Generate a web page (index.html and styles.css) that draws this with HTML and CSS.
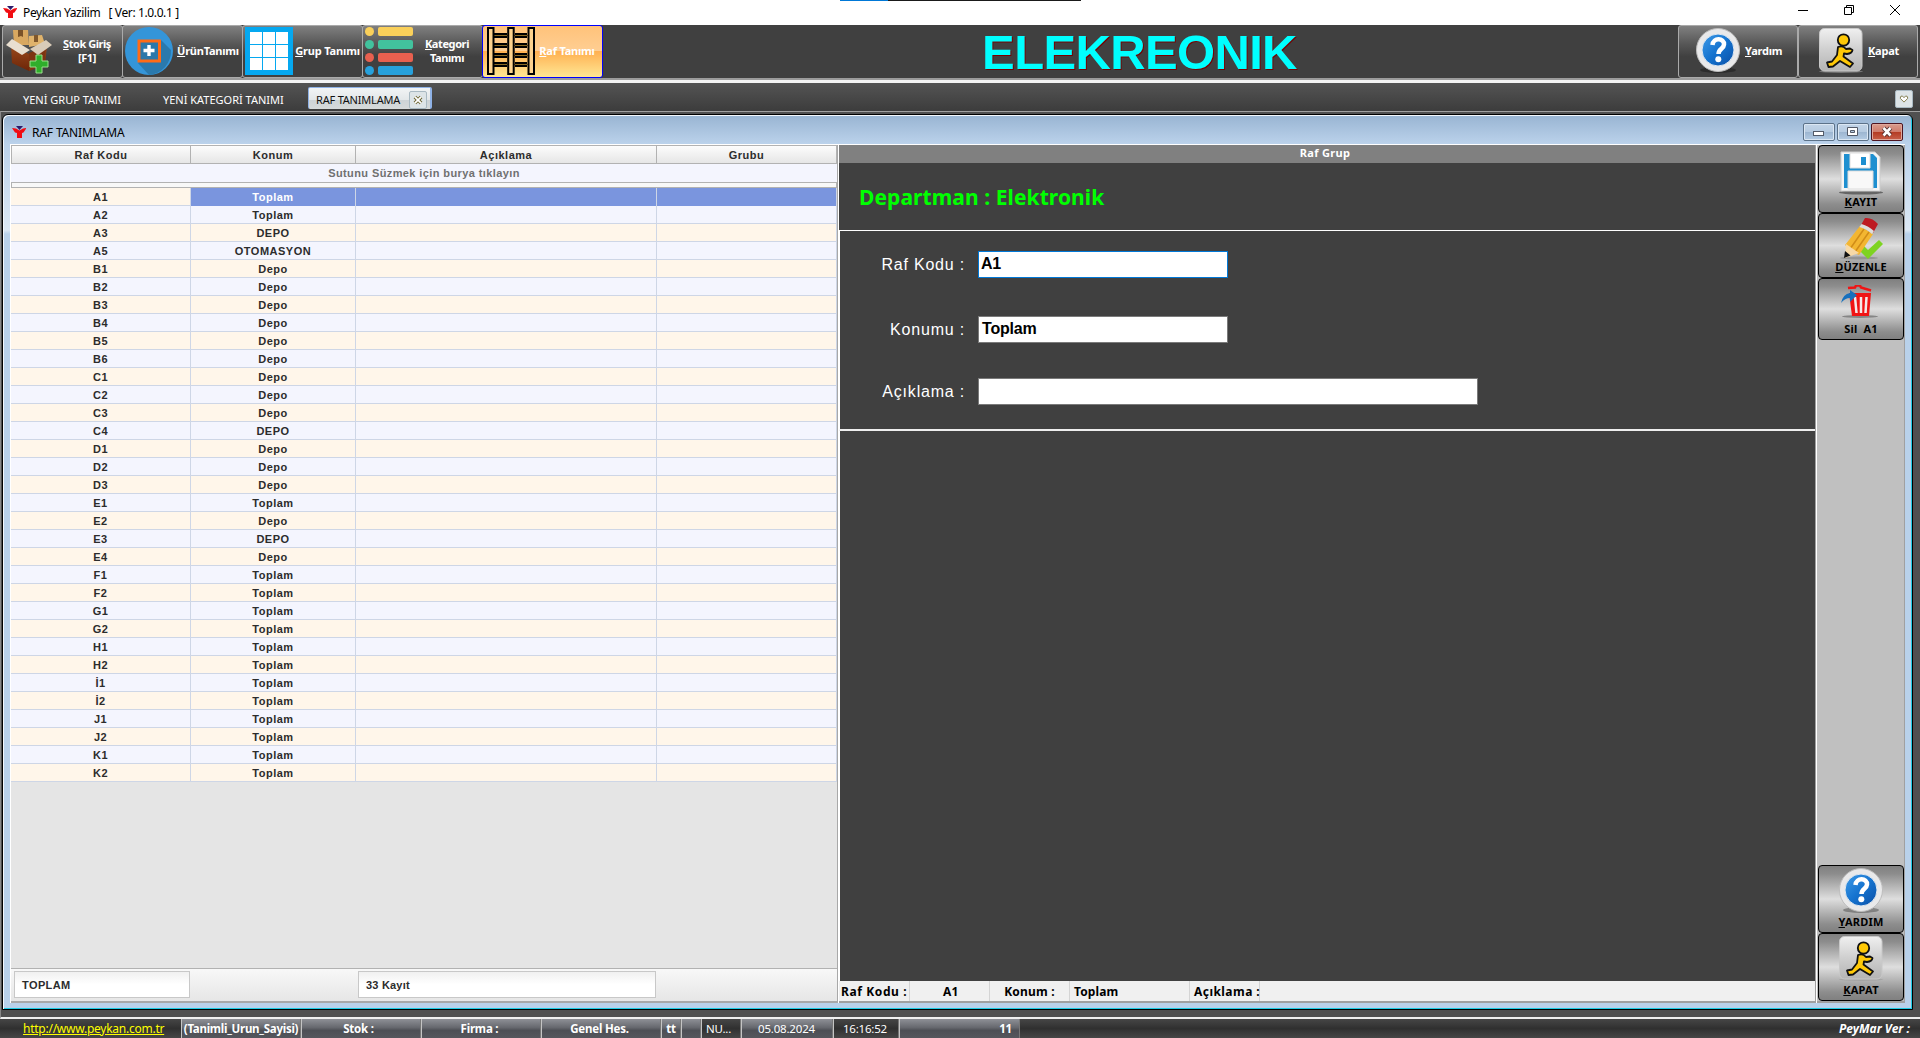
FILE: index.html
```html
<!DOCTYPE html>
<html lang="tr">
<head>
<meta charset="utf-8">
<title>Peykan Yazilim</title>
<link rel="stylesheet" href="styles.css">
</head>
<body>
<svg class="defs" width="0" height="0" aria-hidden="true">
  <defs>
    <linearGradient id="blue" x1="0" y1="0" x2="1" y2="1"><stop offset="0" stop-color="#3f9be8"/><stop offset=".5" stop-color="#1573cf"/><stop offset="1" stop-color="#0a4fa6"/></linearGradient>
    <linearGradient id="plate" x1="0" y1="0" x2="0" y2="1"><stop offset="0" stop-color="#f0f0f0"/><stop offset=".5" stop-color="#cfcfcf"/><stop offset="1" stop-color="#b4b4b4"/></linearGradient>
    <linearGradient id="carton" x1="0" y1="0" x2="0" y2="1"><stop offset="0" stop-color="#9a4a1c"/><stop offset="1" stop-color="#6d2508"/></linearGradient>
  </defs>
  <symbol id="logo" viewBox="0 0 14 12"><path d="M4 0h7L7.500 4z" fill="#2b1a6b"/><path d="M0 2l4 .5L7.500 4.500 11 2.500l3.500-.5-3 4.500-1.500.5v5H5V7l-2-.5z" fill="#f10c12"/></symbol>
  <symbol id="help" viewBox="0 0 44 46"><ellipse cx="22" cy="42" rx="18" ry="3" fill="#000" opacity=".3"/><circle cx="22" cy="22" r="21.500" fill="#e9e9ea" stroke="#bdbdbd"/><circle cx="22" cy="22" r="16" fill="url(#blue)" stroke="#dfe7ef"/><path d="M16.500 17c.5-8 12-7 11.500-.5-.3 4.500-5.500 4-5.500 9.500" fill="none" stroke="#fff" stroke-width="4.500"/><circle cx="22.300" cy="31.300" r="3" fill="#fff"/></symbol>
  <symbol id="runner" viewBox="0 0 44 46"><ellipse cx="22" cy="43.500" rx="22" ry="1.500" fill="#999" opacity=".6"/><rect x=".5" y=".5" width="42.500" height="42.500" rx="5" fill="url(#plate)" stroke="#c8c8c8"/><path d="M19 19Q24 17 27 21L31 20.500 33.500 22Q33 25.500 28 26L25 25.500 24.500 28.500 34 35.500 31 39 21 33 14 38.500 9.500 39 8 34.500 13 33.500 18 27z" fill="#ffc907" stroke="#111" stroke-width="1.800" stroke-linejoin="round"/><circle cx="24.500" cy="12" r="5.700" fill="#ffc907" stroke="#111" stroke-width="1.800"/></symbol>
</svg>

<div class="app">
  <header class="titlebar">
    <svg class="logo"><use href="#logo"/></svg>
    <span class="app-title">Peykan Yazilim   [ Ver: 1.0.0.1 ]</span>
    <div class="win-controls">
      <svg viewBox="0 0 10 10"><path d="M0 5.500h10"/></svg>
      <svg viewBox="0 0 10 10"><path d="M.5 2.500h7v7h-7zM2.500 2.500v-2h7v7h-2"/></svg>
      <svg viewBox="0 0 10 10"><path d="M0 0l10 10M10 0L0 10"/></svg>
    </div>
    <div class="peek"></div>
  </header>

  <nav class="toolbar">
    <button class="tool">
      <svg width="48" height="48" viewBox="0 0 48 48"><path d="M8 3h15l1 15H9z" fill="#d9a860"/><path d="M13 3h5v7l-2-1-3 1z" fill="#7a5228"/><path d="M24 9l13-1 3 9-16 3z" fill="#e0b36b"/><path d="M29 8h4v7h-4z" fill="#80582c"/><path d="M6 18l18 9 18-8-2 18-16 7-17-8z" fill="url(#carton)"/><path d="M24 26l17-7-2 19-15 6z" fill="#7d3411"/><path d="M7 12l18 11-8 5L1 18z" fill="#e9dfd0"/><path d="M25 22l16-9 6 5-14 10z" fill="#d9ccb9"/><path d="M31 28h6v6h6v6h-6v6h-6v-6h-6v-6h6z" fill="#2fae2b" stroke="#9be08d"/></svg>
      <span class="cap cap-stok"><u>S</u>tok Giriş<br>[F1]</span>
    </button>
    <button class="tool">
      <svg width="48" height="48" viewBox="0 0 48 48"><circle cx="24" cy="24" r="24" fill="#3495d9"/><path d="M36 13l10 10a24 24 0 0 1-22 25L13 36z" fill="#2a79ad"/><rect x="14" y="14" width="20.500" height="20" fill="#2b78aa" stroke="#ff6b16" stroke-width="3"/><path d="M24 18v11M18.500 23.500h11" stroke="#fff" stroke-width="3.400"/></svg>
      <span class="cap cap-urun"><u>Ü</u>rünTanımı</span>
    </button>
    <button class="tool">
      <svg width="48" height="48" viewBox="0 0 48 48"><path fill="#05a8f0" d="M0 0h48v48H0z"/><path fill="#fff" d="M5 5h12v12H5zM18 5h12v12H18zM31 5h12v12H31zM5 18h12v12H5zM18 18h12v12H18zM31 18h12v12H31zM5 31h12v12H5zM18 31h12v12H18zM31 31h12v12H31z"/></svg>
      <span class="cap cap-grup"><u>G</u>rup Tanımı</span>
    </button>
    <button class="tool">
      <svg width="48" height="48" viewBox="0 0 48 48"><g fill="#fad05a"><circle cx="4.500" cy="4.500" r="4.500"/><rect x="13" width="35" height="9" rx="2"/></g><g fill="#42c29d"><circle cx="4.500" cy="17.500" r="4.500"/><rect x="13" y="13" width="35" height="9" rx="2"/></g><g fill="#e8604f"><circle cx="4.500" cy="30.500" r="4.500"/><rect x="13" y="26" width="35" height="9" rx="2"/></g><g fill="#27a1dc"><circle cx="4.500" cy="43.500" r="4.500"/><rect x="13" y="39" width="35" height="9" rx="2"/></g></svg>
      <span class="cap cap-kat"><u>K</u>ategori<br>Tanımı</span>
    </button>
    <button class="tool active">
      <svg width="48" height="48" viewBox="0 0 48 48"><path d="M7 7h13M7 10h13M7 17h13M7 20h13M7 27h13M7 30h13M7 36h13M7 39h13M28 7h12M28 10h12M28 17h12M28 20h12M28 27h12M28 30h12M28 36h12M28 39h12" stroke="#000" stroke-width="2"/><path d="M7 8.500h34M7 18.500h34M7 28.500h34M7 37.500h34" stroke="#8a6a24"/><g fill="#fdd28e" stroke="#000" stroke-width="2"><rect x="1" y="1" width="5.500" height="46"/><rect x="21.200" y="1" width="5.500" height="46"/><rect x="41.500" y="1" width="5.500" height="46"/></g></svg>
      <span class="cap cap-raf"><u>R</u>af Tanımı</span>
    </button>
    <h1 class="brand">ELEKREONIK</h1>
    <button class="tool tool-help"><svg width="44" height="46"><use href="#help"/></svg><span class="cap"><u>Y</u>ardım</span></button>
    <button class="tool tool-exit"><svg width="44" height="46"><use href="#runner"/></svg><span class="cap"><u>K</u>apat</span></button>
  </nav>

  <div class="tabs">
    <span class="tab tab-a">YENİ GRUP TANIMI</span>
    <span class="tab tab-b">YENİ KATEGORİ TANIMI</span>
    <span class="tab tab-on">RAF TANIMLAMA<svg class="tab-x" viewBox="0 0 18 18"><path d="M5.500 5.500l7 7M12.500 5.500l-7 7" stroke="#6b6330" stroke-width="4"/><path d="M5.500 5.500l7 7M12.500 5.500l-7 7" stroke="#fff" stroke-width="2"/></svg></span>
    <svg class="tab-more" viewBox="0 0 18 18"><path d="M5 6.500l2-1 2 2 2-2 2 1v2l-4 4-4-4z" fill="#fff" stroke="#77703c"/></svg>
  </div>

  <div class="desk">
    <section class="window">
      <div class="win-title">
        <svg class="logo"><use href="#logo"/></svg>
        <span>RAF TANIMLAMA</span>
        <div class="mdi">
          <i><svg viewBox="0 0 30 16"><rect x="9.500" y="7.500" width="10" height="4" fill="#fff" stroke="#535a68"/></svg></i>
          <i><svg viewBox="0 0 30 16"><path d="M9.500 3.500h10v8h-10z M12.500 6.500v2h4v-2z" fill="#fff" fill-rule="evenodd" stroke="#535a68"/></svg></i>
          <i class="x"><svg viewBox="0 0 30 16"><path d="M11.500 4l7 7.500M18.500 4l-7 7.500" stroke="#503030" stroke-width="4.500"/><path d="M11.500 4l7 7.500M18.500 4l-7 7.500" stroke="#fff" stroke-width="2.600"/></svg></i>
        </div>
      </div>
      <div class="client">
        <div class="grid">
          <div class="head"><b>Raf Kodu</b><b>Konum</b><b>Açıklama</b><b>Grubu</b></div>
          <div class="filter">Sutunu Süzmek için burya tıklayın</div>
          <div class="split"></div>
          <div class="rows">
            <div class="row sel"><b>A1</b><b>Toplam</b><b></b><b></b></div>
            <div class="row"><b>A2</b><b>Toplam</b><b></b><b></b></div>
            <div class="row"><b>A3</b><b>DEPO</b><b></b><b></b></div>
            <div class="row"><b>A5</b><b>OTOMASYON</b><b></b><b></b></div>
            <div class="row"><b>B1</b><b>Depo</b><b></b><b></b></div>
            <div class="row"><b>B2</b><b>Depo</b><b></b><b></b></div>
            <div class="row"><b>B3</b><b>Depo</b><b></b><b></b></div>
            <div class="row"><b>B4</b><b>Depo</b><b></b><b></b></div>
            <div class="row"><b>B5</b><b>Depo</b><b></b><b></b></div>
            <div class="row"><b>B6</b><b>Depo</b><b></b><b></b></div>
            <div class="row"><b>C1</b><b>Depo</b><b></b><b></b></div>
            <div class="row"><b>C2</b><b>Depo</b><b></b><b></b></div>
            <div class="row"><b>C3</b><b>Depo</b><b></b><b></b></div>
            <div class="row"><b>C4</b><b>DEPO</b><b></b><b></b></div>
            <div class="row"><b>D1</b><b>Depo</b><b></b><b></b></div>
            <div class="row"><b>D2</b><b>Depo</b><b></b><b></b></div>
            <div class="row"><b>D3</b><b>Depo</b><b></b><b></b></div>
            <div class="row"><b>E1</b><b>Toplam</b><b></b><b></b></div>
            <div class="row"><b>E2</b><b>Depo</b><b></b><b></b></div>
            <div class="row"><b>E3</b><b>DEPO</b><b></b><b></b></div>
            <div class="row"><b>E4</b><b>Depo</b><b></b><b></b></div>
            <div class="row"><b>F1</b><b>Toplam</b><b></b><b></b></div>
            <div class="row"><b>F2</b><b>Toplam</b><b></b><b></b></div>
            <div class="row"><b>G1</b><b>Toplam</b><b></b><b></b></div>
            <div class="row"><b>G2</b><b>Toplam</b><b></b><b></b></div>
            <div class="row"><b>H1</b><b>Toplam</b><b></b><b></b></div>
            <div class="row"><b>H2</b><b>Toplam</b><b></b><b></b></div>
            <div class="row"><b>İ1</b><b>Toplam</b><b></b><b></b></div>
            <div class="row"><b>İ2</b><b>Toplam</b><b></b><b></b></div>
            <div class="row"><b>J1</b><b>Toplam</b><b></b><b></b></div>
            <div class="row"><b>J2</b><b>Toplam</b><b></b><b></b></div>
            <div class="row"><b>K1</b><b>Toplam</b><b></b><b></b></div>
            <div class="row"><b>K2</b><b>Toplam</b><b></b><b></b></div>
          </div>
          <div class="foot"><span class="sum">TOPLAM</span><span class="sum count">33 Kayıt</span></div>
        </div>

        <div class="form">
          <div class="form-cap">Raf Grup</div>
          <div class="dept"><span>Departman : Elektronik</span></div>
          <div class="fields">
            <label class="field f1"><span>Raf Kodu :</span><span class="input focus">A1</span></label>
            <label class="field f2"><span>Konumu :</span><span class="input">Toplam</span></label>
            <label class="field f3"><span>Açıklama :</span><span class="input wide"></span></label>
          </div>
          <div class="blank"></div>
          <div class="info"><span class="i1">Raf Kodu :</span><span class="i2">A1</span><span class="i3">Konum :</span><span class="i4">Toplam</span><span class="i5">Açıklama :</span></div>
        </div>

        <aside class="side">
          <button class="act h68"><svg width="46" height="44" viewBox="0 0 46 44"><ellipse cx="23" cy="41.500" rx="22" ry="2" fill="#333" opacity=".6"/><path d="M3 1h34l5 5v34H3z" fill="#f4f4f4" stroke="#ccc"/><path d="M6 3h29l4 4v30H6z" fill="#1e8fd0"/><path d="M12 2h20v15H12z" fill="#fff" stroke="#ddd"/><path d="M23 6h5v8h-5z" fill="#1e8fd0"/><path d="M10 20h25v18H10z" fill="#f8f8f8" stroke="#ddd"/></svg><span><u>K</u>AYIT</span></button>
          <button class="act h65"><svg width="46" height="44" viewBox="0 0 46 44"><ellipse cx="21" cy="42" rx="19" ry="1.500" fill="#888" opacity=".7"/><path d="M20 33l5-4 5 5L41 24l4 4-15 15z" fill="#7ed321"/><path d="M22 10l13 8-14 21-7-3-7-7z" fill="#f3b631"/><path d="M26 13l-14 20M31 16L17 36" stroke="#d18d18" stroke-width="1.500"/><path d="M8 28l13 9-14 5z" fill="#f7d9a7"/><path d="M7 35l5.500 4.500L6 42z" fill="#111"/><path d="M23 9l4-7q7-1 13 6l-5 9q-5-6-12-8z" fill="#bd1a22"/><path d="M21.500 11l2-3q7 2 12.500 7l-2 3q-5-5-12.500-7z" fill="#ddd"/></svg><span><u>D</u>ÜZENLE</span></button>
          <button class="act h62 del"><svg width="46" height="34" viewBox="0 0 46 34"><ellipse cx="22" cy="31.500" rx="18" ry="1.500" fill="#777" opacity=".8"/><path d="M10 3l7-.5 1-2h4l1 2 10 3" stroke="#f01414" stroke-width="2.500" fill="none"/><path d="M11 8h22l-2 23H14z" fill="#f01414"/><path d="M17 12l1.500 16M23 12v16M28.500 12l-1 16" stroke="#f5e9e9" stroke-width="2.500"/><path d="M3 18Q5 9 12 8V5l7 5-7 7v-4q-5 0-9 5z" fill="#1770bd"/></svg><span>Sil&nbsp; A1</span></button>
          <div class="gap"></div>
          <button class="act h68 low"><svg width="44" height="46"><use href="#help"/></svg><span><u>Y</u>ARDIM</span></button>
          <button class="act h68 low last"><svg width="44" height="46"><use href="#runner"/></svg><span><u>K</u>APAT</span></button>
        </aside>
      </div>
    </section>
  </div>

  <footer class="status">
    <span class="link">http://www.peykan.com.tr</span>
    <span class="seg s120 tan">(Tanimli_Urun_Sayisi)</span>
    <span class="seg s120 stk">Stok :</span>
    <span class="seg s120 frm">Firma :</span>
    <span class="seg s120 frm">Genel Hes.</span>
    <span class="seg s20">tt</span>
    <span class="seg s20"></span>
    <span class="seg dark num">NU...</span>
    <span class="seg date">05.08.2024</span>
    <span class="seg dark time">16:16:52</span>
    <span class="seg cnt">11</span>
    <span class="ver">PeyMar Ver :</span>
  </footer>
</div>
</body>
</html>
```
FILE: styles.css
```css
* { box-sizing: border-box; }
body { margin: 0; width: 1920px; height: 1038px; overflow: hidden; font-family: "Noto Sans", "Open Sans", sans-serif; font-size: 12px; color: #000; }
.defs { position: absolute; }
.app { display: flex; flex-direction: column; height: 1038px; background: #505050; }
button { border: 0; padding: 0; font: inherit; background: none; }
span, b { white-space: pre; }
.logo { width: 14px; height: 12px; flex: none; }

.titlebar { height: 25px; background: #fff; display: flex; align-items: center; padding: 0 20px 0 3px; position: relative; }
.titlebar .logo { margin-top: -2px; }
.app-title { margin-left: 6px; margin-top: -1px; letter-spacing: -.38px; }
.win-controls { margin-left: auto; display: flex; gap: 36px; margin-top: -5px; }
.win-controls svg { width: 10px; height: 10px; fill: none; stroke: #000; }
.peek { position: absolute; left: 840px; top: 0; width: 241px; height: 1px; background: linear-gradient(90deg, #0078d7 48px, #1a1a1a 48px); }

.toolbar { height: 58px; display: flex; padding: 0 2px 0 2px; background: #404040; border-bottom: 3px solid #f4f4f4; box-shadow: inset 0 -2px #9c9c9c; }
.tool { width: 121px; height: 53px; margin-right: -1px; flex: none; display: flex; align-items: center; padding: 0 0 1px 2px; border: 1px solid #aaa; border-radius: 3px; background: linear-gradient(#808080, #575757 35%, #404040 60%, #404040); color: #fff; }
.tool svg { flex: none; }
.tool.active { border-color: #00f; background: linear-gradient(#ffc27a, #ffce92 48%, #ffb052 50%, #ffe793); padding-left: 4px; }
.cap { font: bold 11px/14px "Noto Sans", sans-serif; text-align: center; flex: 1; letter-spacing: -.2px; }
.cap-stok { padding-right: 1px; letter-spacing: -.45px; }
.cap-urun { letter-spacing: -.22px; padding-left: 1px; }
.cap-grup { letter-spacing: -.15px; }
.cap-kat { padding-right: 1px; letter-spacing: -.4px; }
.cap-raf { padding-right: 3px; }
.brand { margin: 0 auto; padding-right: 1px; font: bold 49px/54px "Liberation Sans", sans-serif; letter-spacing: -.65px; color: #0ff; text-shadow: 1px 1px #700; }
.tool-help, .tool-exit { width: 120px; margin-right: 0; }
.tool-help { padding-left: 17px; }
.tool-exit { padding-left: 20px; }
.tool-help .cap, .tool-exit .cap { flex: none; margin-left: 5px; }

.tabs { height: 28px; display: flex; align-items: flex-end; background: linear-gradient(#545454, #3c3c3c); color: #fff; font-size: 11px; padding-right: 7px; }
.tab { height: 22px; line-height: 22px; }
.tab-a { width: 140px; padding-left: 23px; }
.tab-b { width: 168px; padding-left: 23px; }
.tab-on { width: 124px; height: 22px; margin-bottom: 2px; padding: 2px 3px 0 7px; display: flex; align-items: center; justify-content: space-between; letter-spacing: -.2px; color: #111; background: linear-gradient(#f2f4f5, #e3e7e9 55%, #cdd3d6 56%, #d6dadb); border: 1px solid #8fb2e6; border-bottom: 0; border-right: 2px solid #8fb2e6; border-radius: 2px; }
.tab-x, .tab-more { width: 18px; height: 18px; background: #dde4e7; border: 1px solid #a9b9c2; border-radius: 2px; fill: none; }
.tab-more { margin: 0 0 3px auto; }

.desk { height: 908px; padding: 2px 7px 0 2px; background: #505050; border-top: 1px solid #a0a0a0; border-bottom: 2px solid #f0f0f0; border-left: 1px solid #888; }
.desk .window { margin-left: -1px; }
.window { width: 1911px; height: 896px; border: 1px solid #000; border-radius: 6px 6px 0 0; padding: 0 7px 6px 7px; background: linear-gradient(#98b4d2, #bbd2eb 29px, #dce8f4 115px, #b9d1ea 119px); box-shadow: inset 1px 1px #f4f8fc, inset -1px -1px #1ecbe4; }
.win-title { height: 29px; display: flex; align-items: center; padding: 5px 2px 0 2px; font-size: 12px; }
.win-title span { margin-left: 6px; letter-spacing: -.15px; }
.mdi { display: flex; gap: 2px; margin-left: auto; margin-top: -1px; }
.mdi i { width: 32px; height: 18px; border: 1px solid #5c7289; border-radius: 2px; background: linear-gradient(#c3d5e8, #b6cbe1 48%, #9cb5d0 50%, #b4cce4); box-shadow: inset 0 0 0 1px #dbe7f3; }
.mdi svg { display: block; width: 30px; height: 16px; }
.mdi .x { background: linear-gradient(#d99c8e, #cf7c6c 48%, #b33a22 50%, #c8604a); border-color: #4e1420; box-shadow: inset 0 0 0 1px #dfa89c; }

.client { display: flex; height: 859px; border-top: 1px solid #fff; border-left: 1px solid #fff; background: #fff; }
.grid { width: 827px; flex: none; display: flex; flex-direction: column; background: #e5e5e5; border-right: 1px solid #a8a8a8; border-bottom: 2px solid #a8a8a8; font: bold 11px/17px "Liberation Sans", sans-serif; letter-spacing: .5px; color: #2c2c2c; text-align: center; }
.head, .row { display: grid; grid-template-columns: 180px 165px 301px 180px; }
.head { height: 19px; grid-template-columns: 179px 165px 301px 180px; border: 1px solid #b2b2b2; border-right: 0; background: linear-gradient(#fcfcfc, #e6e6e6); }
.head b { border-right: 1px solid #b2b2b2; line-height: 18px; }
.filter { height: 18px; line-height: 18px; background: #f4f5fe; color: #707070; letter-spacing: .4px; }
.split { height: 6px; background: #f8f8f8; border: 1px solid #b2b2b2; }
.row { height: 18px; background: #f4f5fe; border-bottom: 1px solid #ced6e6; }
.row:nth-child(odd) { background: #fff6ea; }
.row b { border-right: 1px solid #ced6e6; line-height: 18px; }
.sel b:not(:first-child) { background: #7a95de; color: #fff; }
.foot { margin-top: auto; height: 33px; border-top: 1px solid #b2b2b2; background: linear-gradient(#f8f8f8, #e6e6e6); display: flex; padding: 2px 3px 3px; gap: 168px; }
.sum { width: 176px; border: 1px solid #c8c8c8; background: linear-gradient(#f0f0f0, #fff 50%); text-align: left; padding-left: 7px; line-height: 26px; letter-spacing: .4px; }
.count { width: 298px; letter-spacing: .2px; }

.form { width: 977px; flex: none; margin-left: 1px; display: flex; flex-direction: column; background: #404040; color: #fff; border-right: 1px solid #a0a0a0; border-bottom: 2px solid #a0a0a0; }
.form-cap { height: 18px; background: #808080; font-weight: bold; font-size: 11px; line-height: 15px; text-align: center; padding-right: 4px; letter-spacing: .3px; }
.dept { height: 68px; border-bottom: 1px solid #fff; padding: 18px 0 0 20px; }
.dept span { font: bold 21px/32px "Noto Sans", sans-serif; letter-spacing: .08px; color: #0f0; }
.fields { height: 200px; border-left: 1px solid #fff; border-bottom: 2px solid #eee; }
.field { display: flex; align-items: center; height: 27px; font: 16px/27px "Liberation Sans", sans-serif; letter-spacing: .8px; }
.field > span:first-child { width: 125px; text-align: right; margin-right: 13px; }
.f1 { margin-top: 20px; }
.f2 { margin-top: 38px; }
.f3 { margin-top: 35px; }
.f3 > span:first-child { line-height: 25px; }
.input { width: 250px; height: 27px; background: #fff; border: 1px solid #7a7a7a; color: #000; font-weight: bold; line-height: 24px; letter-spacing: -.2px; padding-left: 3px; }
.input.focus { border-color: #0078d7; padding-left: 2px; }
.input.wide { width: 500px; }
.blank { flex: 1; border-left: 1px solid #fff; }
.info { height: 20px; background: #f0f0f0; color: #000; display: flex; font: bold 12px/21px "Noto Sans", sans-serif; letter-spacing: .2px; }
.info span { border-right: 1px solid #d4d4d4; }
.info .i1 { width: 71px; padding-left: 2px; letter-spacing: .6px; }
.info .i2 { width: 80px; padding-left: 33px; }
.info .i3 { width: 80px; text-align: center; }
.info .i4 { width: 120px; padding-left: 4px; letter-spacing: .1px; }
.info .i5 { width: 70px; padding-left: 4px; letter-spacing: .45px; }

.side { width: 88px; flex: none; margin-left: 1px; padding-left: 1px; background: #c0c0c0; border-right: 1px solid #a0a0a0; border-bottom: 2px solid #a0a0a0; display: flex; flex-direction: column; }
.act { width: 86px; flex: none; display: flex; flex-direction: column; align-items: center; justify-content: space-between; padding: 5px 0 3px; border: 1px solid #000; border-radius: 4px; background: linear-gradient(#808080, #8d8d8d 12%, #dedede 50%, #8d8d8d 88%, #808080); font: bold 11px/14px "Noto Sans", sans-serif; letter-spacing: .2px; }
.h68 { height: 68px; }
.h65 { height: 65px; padding-top: 2px; }
.h62 { height: 62px; }
.del { padding-top: 6px; }
.low { padding-top: 2px; }
.gap { flex: 1; }

.status { height: 19px; display: flex; background: linear-gradient(#464646, #303030 50%, #464646); color: #fff; font-size: 12px; line-height: 19px; }
.link { width: 181px; padding-left: 23px; color: #ff0; text-decoration: underline; letter-spacing: -.25px; }
.seg { flex: none; text-align: center; font-weight: bold; font-size: 11.500px; letter-spacing: -.2px; background: linear-gradient(#8e9096, #66686e 45%, #4d4f55 60%, #55575d); border-left: 1px solid #c4c4c4; border-right: 1px solid #777; }
.s120 { width: 120px; }
.tan { letter-spacing: -.27px; }
.stk { padding-right: 5px; }
.frm { padding-right: 3px; }
.s20 { width: 20px; }
.seg.dark { background: none; font-weight: normal; }
.num { width: 40px; padding-right: 5px; }
.date { width: 92px; padding-right: 1px; font-weight: normal; }
.time { width: 66px; padding-right: 2px; }
.cnt { width: 121px; text-align: right; padding-right: 7px; }
.ver { margin-left: auto; padding-right: 10px; font-weight: bold; font-style: italic; }
```
